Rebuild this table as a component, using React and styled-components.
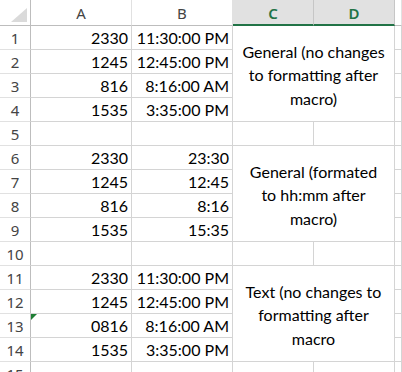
import React from 'react';
import styled, { createGlobalStyle } from 'styled-components';

const Global = createGlobalStyle`
  html, body { margin: 0; padding: 0; background: #fff; }
  body { width: 402px; height: 372px; overflow: hidden; }
`;

const Sheet = styled.div`
  display: grid;
  grid-template-columns: 31px 101px 101px 81px 81px 1fr;
  grid-template-rows: 26px repeat(15, 24px);
  width: 402px;
  height: 372px;
  overflow: hidden;
  font-family: Lato, "Liberation Sans", sans-serif;
  font-size: 16px;
  color: #000;
`;

const Corner = styled.div`
  position: relative;
  box-sizing: border-box;
  border-right: 1px solid #bdbdbd;
  border-bottom: 1px solid #bdbdbd;
  &::after {
    content: '';
    position: absolute;
    right: 3px;
    bottom: 3px;
    border-left: 16px solid transparent;
    border-bottom: 14px solid #dadada;
  }
`;

const ColHead = styled.div`
  box-sizing: border-box;
  display: flex;
  align-items: center;
  justify-content: center;
  font-family: "Noto Sans", "Open Sans", sans-serif;
  font-size: 15px;
  font-weight: ${p => (p.$active ? 600 : 400)};
  color: ${p => (p.$active ? '#217346' : '#444')};
  background: ${p => (p.$active ? '#e1e1e1' : '#fff')};
  border-right: 1px solid ${p => (p.$active ? '#c6c6c6' : '#e1e1e1')};
  border-bottom: ${p => (p.$active ? '2px solid #217346' : '1px solid #bdbdbd')};
  padding-top: 1px;
`;

const RowHead = styled.div`
  box-sizing: border-box;
  display: flex;
  align-items: center;
  justify-content: center;
  font-family: "Noto Sans", "Open Sans", sans-serif;
  font-size: 15px;
  color: #444;
  border-right: 1px solid #bdbdbd;
  border-bottom: 1px solid #e1e1e1;
  padding-top: 1px;
`;

const Cell = styled.div`
  position: relative;
  box-sizing: border-box;
  display: flex;
  align-items: flex-end;
  justify-content: flex-end;
  padding: 0 3px 2px 0;
  border-right: 1px solid #d4d4d4;
  border-bottom: 1px solid #d4d4d4;
  white-space: nowrap;
  ${p =>
    p.$flag &&
    `&::before {
      content: '';
      position: absolute;
      left: 0;
      top: 0;
      border-top: 6px solid #1e7e34;
      border-right: 6px solid transparent;
    }`}
`;

const Merged = styled.div`
  box-sizing: border-box;
  grid-column: 4 / 6;
  grid-row: ${p => p.$row} / span 4;
  display: flex;
  flex-direction: column;
  align-items: center;
  justify-content: center;
  text-align: center;
  line-height: 23.5px;
  padding: 3px 2px 0;
  border-right: 1px solid #d4d4d4;
  border-bottom: 1px solid #d4d4d4;
  white-space: nowrap;
`;

const blocks = [
  {
    start: 1,
    rows: [
      ['2330', '11:30:00 PM'],
      ['1245', '12:45:00 PM'],
      ['816', '8:16:00 AM'],
      ['1535', '3:35:00 PM'],
    ],
    note: ['General (no changes', 'to formatting after', 'macro)'],
  },
  {
    start: 6,
    rows: [
      ['2330', '23:30'],
      ['1245', '12:45'],
      ['816', '8:16'],
      ['1535', '15:35'],
    ],
    note: ['General (formated', 'to hh:mm after', 'macro)'],
  },
  {
    start: 11,
    rows: [
      ['2330', '11:30:00 PM'],
      ['1245', '12:45:00 PM'],
      ['0816', '8:16:00 AM', true],
      ['1535', '3:35:00 PM'],
    ],
    note: ['Text (no changes to', 'formatting after', 'macro'],
  },
];

const App = () => {
  const items = [];
  blocks.forEach((b, bi) => {
    b.rows.forEach((r, i) => {
      const n = b.start + i;
      const gr = n + 1;
      items.push(
        <RowHead key={`h${n}`} style={{ gridRow: gr, gridColumn: 1 }}>{n}</RowHead>,
        <Cell key={`a${n}`} $flag={r[2]} style={{ gridRow: gr, gridColumn: 2 }}>{r[0]}</Cell>,
        <Cell key={`b${n}`} style={{ gridRow: gr, gridColumn: 3 }}>{r[1]}</Cell>,
        <Cell key={`e${n}`} style={{ gridRow: gr, gridColumn: 6 }} />
      );
    });
    items.push(
      <Merged key={`m${bi}`} $row={b.start + 1}>
        {b.note.map(line => (
          <span key={line}>{line}</span>
        ))}
      </Merged>
    );
  });
  [5, 10, 15].forEach(n => {
    const gr = n + 1;
    items.push(
      <RowHead key={`h${n}`} style={{ gridRow: gr, gridColumn: 1 }}>{n}</RowHead>,
      ...[2, 3, 4, 5, 6].map(c => (
        <Cell key={`x${n}-${c}`} style={{ gridRow: gr, gridColumn: c }} />
      ))
    );
  });

  return (
    <>
      <Global />
      <Sheet>
        <Corner />
        <ColHead>A</ColHead>
        <ColHead>B</ColHead>
        <ColHead $active>C</ColHead>
        <ColHead $active>D</ColHead>
        <ColHead />
        {items}
      </Sheet>
    </>
  );
};

export default App;
